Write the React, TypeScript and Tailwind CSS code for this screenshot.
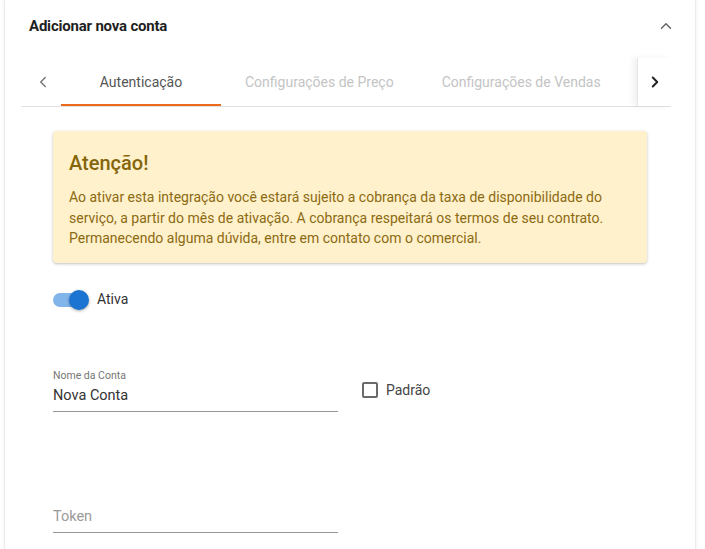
import { ChevronLeft, ChevronRight, ChevronUp } from "lucide-react";

const font = { fontFamily: "Roboto, 'Noto Sans', sans-serif" };

function Tab({ label, active }: { label: string; active?: boolean }) {
  return (
    <div
      className={`relative flex h-[48px] shrink-0 items-center justify-center px-6 text-[14px] ${
        active ? "w-[160px] text-[#555555]" : "text-[#c4c4c4]"
      }`}
    >
      {label}
      {active && <div className="absolute bottom-0 left-0 h-[2px] w-full bg-[#ec6a1c]" />}
    </div>
  );
}

function TextField({ label, value, placeholder }: { label?: string; value?: string; placeholder?: string }) {
  return (
    <div className="w-[285px]">
      {label && <div className="text-[10.5px] leading-[12px] text-[#757575]">{label}</div>}
      <div className="border-b border-[#949494] pb-[6px] pt-[5px] text-[14.5px] leading-[18px]">
        {value ? <span className="text-[#333333]">{value}</span> : <span className="text-[#9a9a9a]">{placeholder}</span>}
      </div>
    </div>
  );
}

export default function App() {
  return (
    <div className="min-h-[549px] bg-white" style={font}>
      <div className="ml-[4px] min-h-[549px] w-[692px] border-x border-[#ececec] bg-white shadow-[0_0_3px_rgba(0,0,0,0.08)]">
        {/* header */}
        <div className="flex h-[52px] items-center justify-between pl-6 pr-[20px]">
          <span className="text-[15px] font-bold tracking-[-0.2px] text-[#1f1f1f]">Adicionar nova conta</span>
          <ChevronUp className="h-[18px] w-[18px] text-[#666666]" strokeWidth={2} />
        </div>

        {/* tabs */}
        <div className="ml-4 mr-6 mt-[6px] flex h-[49px] border-b border-[#e2e2e2]">
          <div className="flex w-[40px] shrink-0 items-center justify-center pl-[4px]">
            <ChevronLeft className="h-[18px] w-[18px] text-[#777777]" strokeWidth={2} />
          </div>
          <div className="flex flex-1 overflow-hidden">
            <Tab label="Autenticação" active />
            <Tab label="Configurações de Preço" />
            <Tab label="Configurações de Vendas" />
          </div>
          <div className="flex w-[34px] shrink-0 items-center justify-center border-l border-[#e6e6e6] shadow-[-4px_0_6px_rgba(0,0,0,0.06)]">
            <ChevronRight className="h-[18px] w-[18px] text-[#222222]" strokeWidth={2.6} />
          </div>
        </div>

        {/* content */}
        <div className="ml-[48px] w-[594px] pt-[24px]">
          <div className="rounded-[4px] bg-[#fff1cb] px-4 pb-[14px] pt-[18px] shadow-[0_1px_3px_rgba(0,0,0,0.25)]">
            <div className="text-[20px] font-medium leading-[28px] text-[#85650a]">Atenção!</div>
            <p className="mt-[10px] text-[14px] leading-[20.5px] text-[#8c6a12]">
              Ao ativar esta integração você estará sujeito a cobrança da taxa de disponibilidade do serviço, a partir do
              mês de ativação. A cobrança respeitará os termos de seu contrato. Permanecendo alguma dúvida, entre em
              contato com o comercial.
            </p>
          </div>

          <div className="mt-[27px] flex h-[20px] items-center">
            <div className="relative h-[14px] w-[34px] rounded-full bg-[#82b5ea]">
              <div className="absolute -top-[3px] left-[16px] h-[20px] w-[20px] rounded-full bg-[#1c74d2] shadow-[0_1px_3px_rgba(0,0,0,0.35)]" />
            </div>
            <span className="ml-[10px] text-[14px] text-[#333333]">Ativa</span>
          </div>

          <div className="mt-[60px] flex items-start">
            <TextField label="Nome da Conta" value="Nova Conta" />
            <label className="ml-[24px] mt-[10px] flex items-center">
              <span className="h-[16px] w-[16px] rounded-[2px] border-2 border-[#6b6b6b]" />
              <span className="ml-[8px] text-[14px] text-[#444444]">Padrão</span>
            </label>
          </div>

          <div className="mt-[91px]">
            <TextField placeholder="Token" />
          </div>
        </div>
      </div>
    </div>
  );
}
